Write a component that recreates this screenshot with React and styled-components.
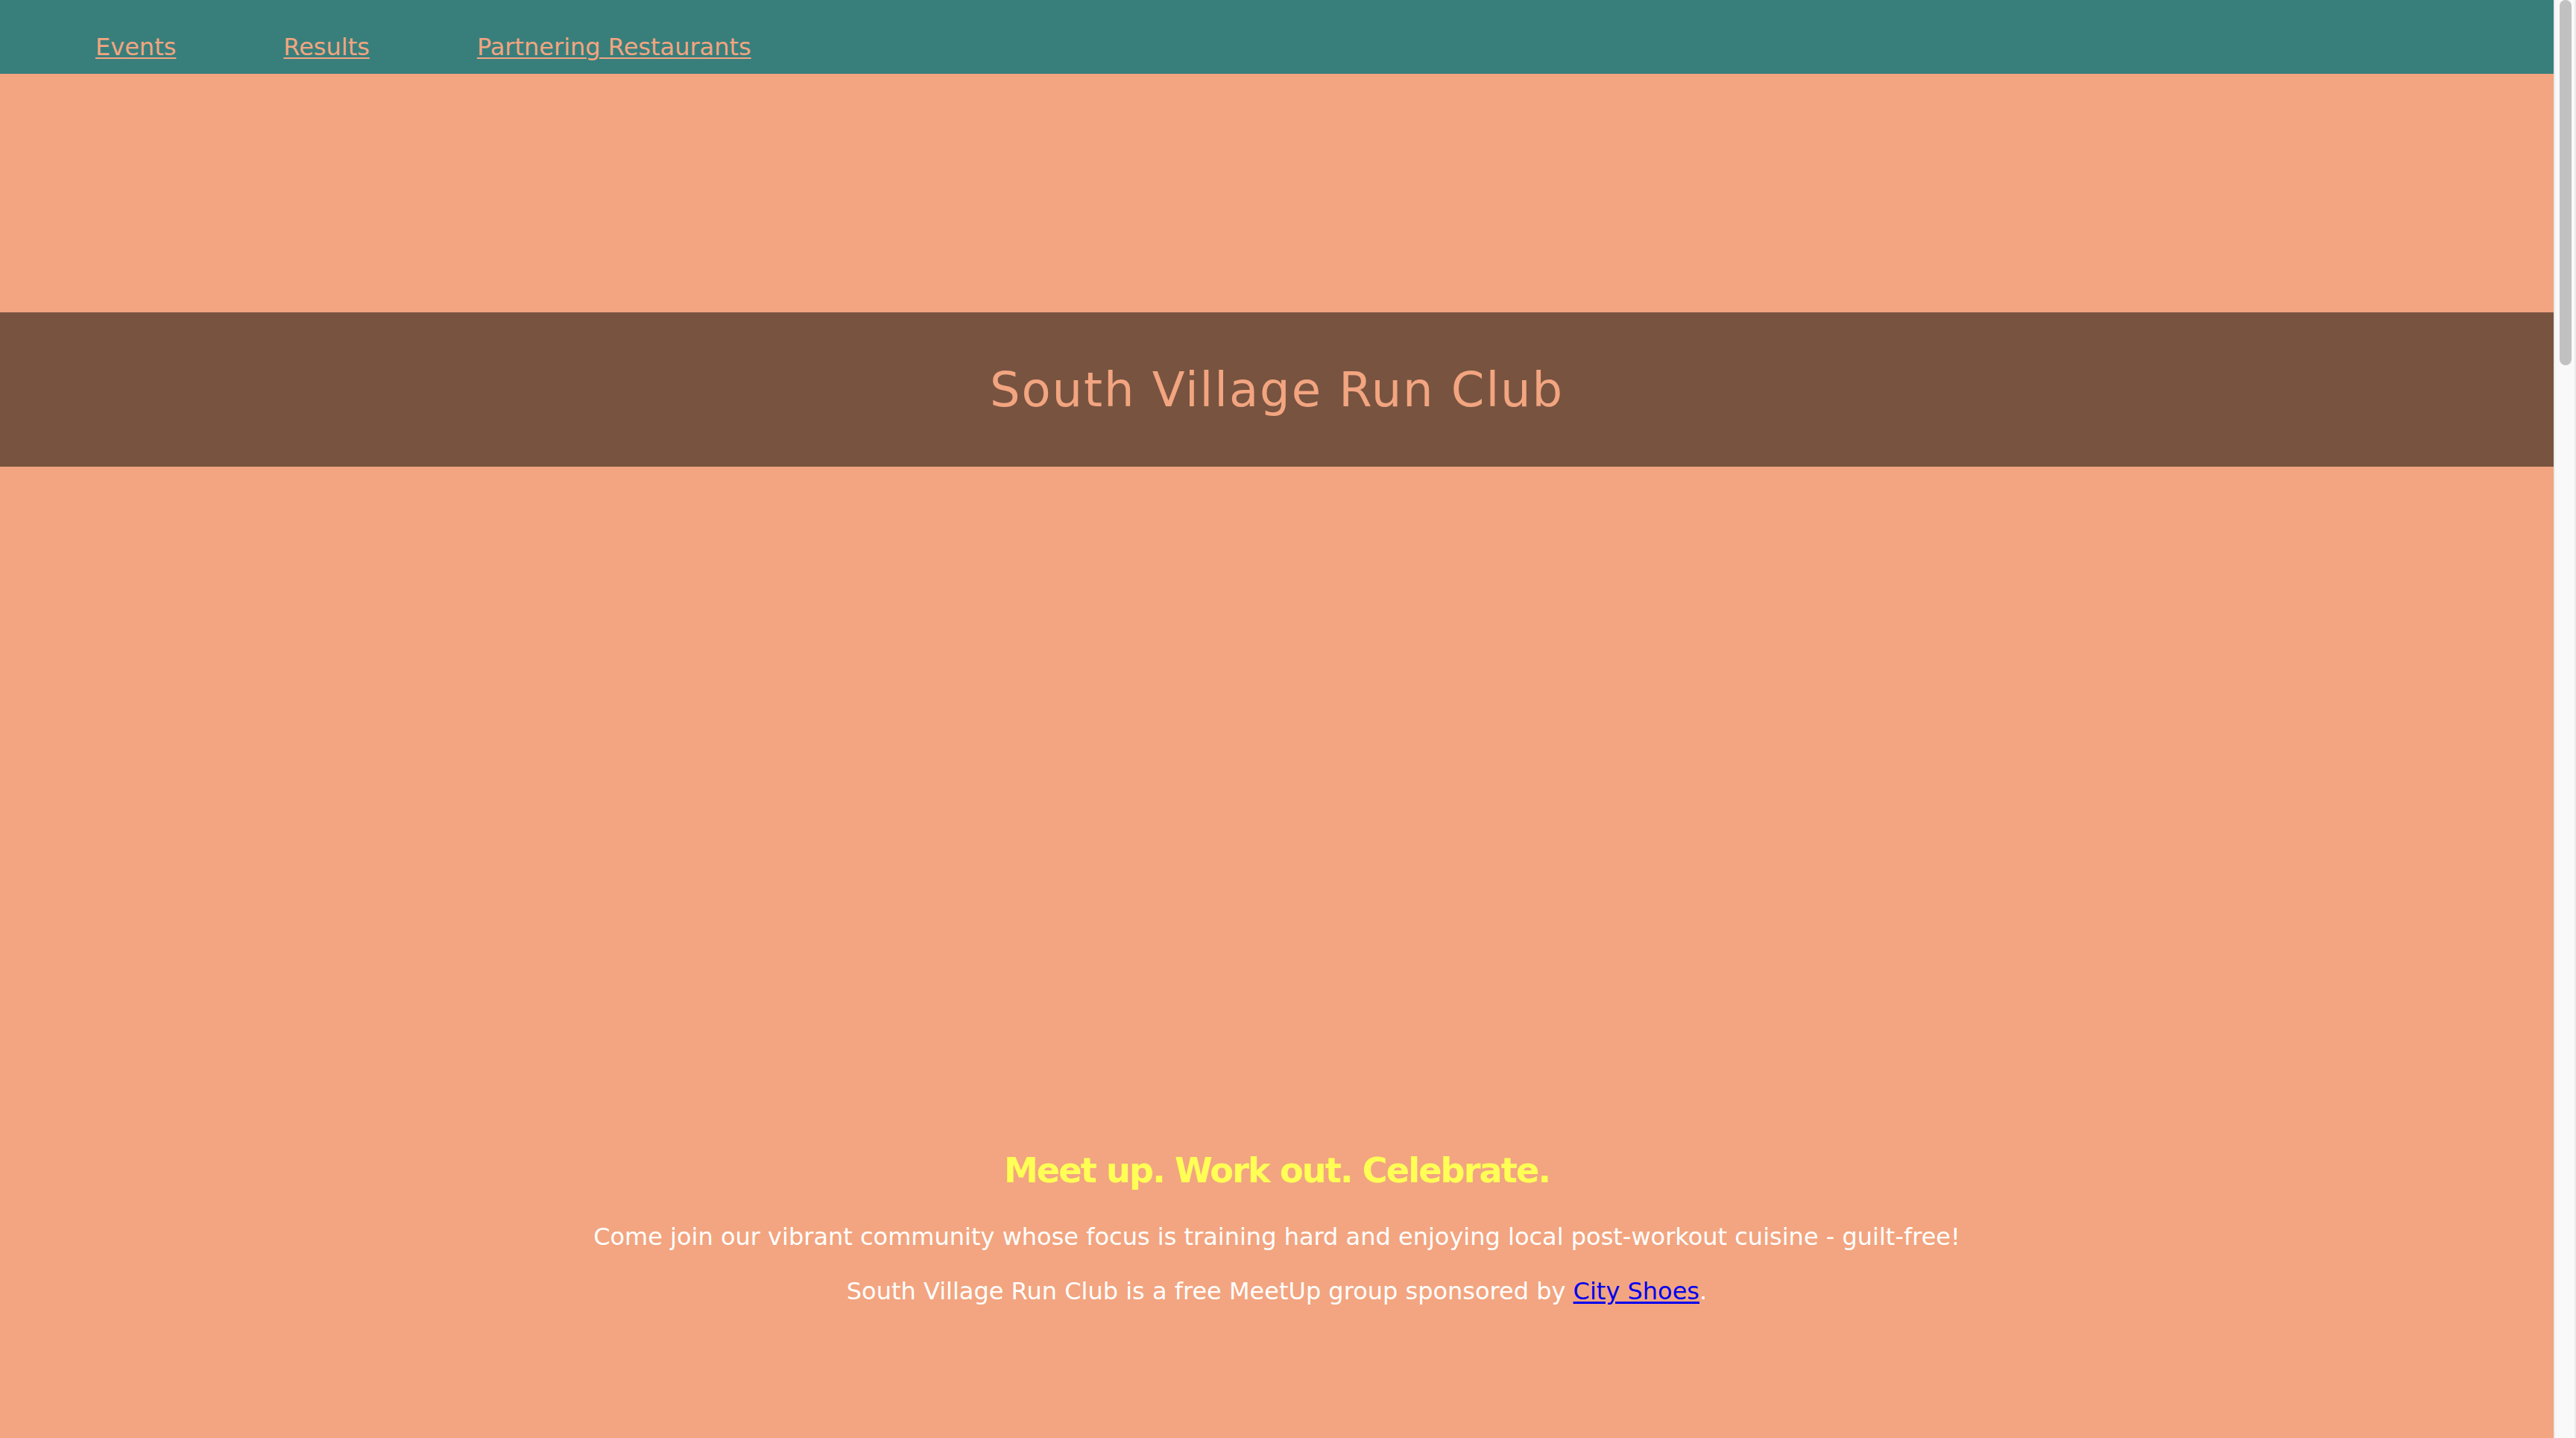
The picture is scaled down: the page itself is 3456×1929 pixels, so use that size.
import React from "react";
import styled, { createGlobalStyle } from "styled-components";

const Global = createGlobalStyle`
  html, body { margin: 0; padding: 0; }
  body {
    background: #f2a580;
    font-family: "DejaVu Sans", "Noto Sans", sans-serif;
  }
`;

const Page = styled.div`
  min-height: 7594px;
  margin-right: 30px;
  background: #f2a580;
`;

const Nav = styled.nav`
  box-sizing: border-box;
  height: 99px;
  background: #387f7c;
  display: flex;
  align-items: flex-start;
  gap: 144px;
  padding: 44px 0 0 128px;
`;

const NavLink = styled.a`
  color: #f2a580;
  font-size: 32px;
  line-height: normal;
  text-decoration: underline;
  text-underline-offset: 3px;
  text-decoration-thickness: 2px;
`;

const Hero = styled.div`
  height: 320px;
`;

const Banner = styled.header`
  height: 207px;
  background: #785340;
  display: flex;
  align-items: center;
  justify-content: center;
`;

const Title = styled.h1`
  margin: 0;
  color: #f2a580;
  font-size: 64px;
  font-weight: 400;
  line-height: normal;
  letter-spacing: 1.9px;
`;

const Intro = styled.section`
  padding-top: 917px;
  display: flex;
  flex-direction: column;
  align-items: center;
  text-align: center;
`;

const Headline = styled.h2`
  margin: 0;
  color: #ffff55;
  font-size: 46px;
  font-weight: 700;
  line-height: normal;
  letter-spacing: -1.8px;
`;

const Text = styled.p`
  margin: ${(p) => p.$top}px 0 0;
  color: #ffffff;
  font-size: 32px;
  line-height: normal;
`;

const Sponsor = styled.a`
  color: #0000ee;
  text-decoration: underline;
  text-underline-offset: 3px;
`;

const ScrollTrack = styled.div`
  position: fixed;
  top: 0;
  right: 0;
  box-sizing: border-box;
  width: 30px;
  height: 100vh;
  background: #f9f9f9;
  border-left: 2px solid #ebebeb;
  border-right: 2px solid #ebebeb;
  padding-left: 6px;
`;

const ScrollThumb = styled.div`
  width: 16px;
  height: 490px;
  border-radius: 8px;
  background: #c1c1c1;
`;

export default function App() {
  return (
    <>
      <Global />
      <Page>
        <Nav>
          <NavLink href="#">Events</NavLink>
          <NavLink href="#">Results</NavLink>
          <NavLink href="#">Partnering Restaurants</NavLink>
        </Nav>
        <Hero />
        <Banner>
          <Title>South Village Run Club</Title>
        </Banner>
        <Intro>
          <Headline>Meet up. Work out. Celebrate.</Headline>
          <Text $top={43}>
            Come join our vibrant community whose focus is training hard and enjoying local post-workout cuisine - guilt-free!
          </Text>
          <Text $top={35}>
            South Village Run Club is a free MeetUp group sponsored by <Sponsor href="#">City Shoes</Sponsor>.
          </Text>
        </Intro>
      </Page>
      <ScrollTrack aria-hidden="true">
        <ScrollThumb />
      </ScrollTrack>
    </>
  );
}
